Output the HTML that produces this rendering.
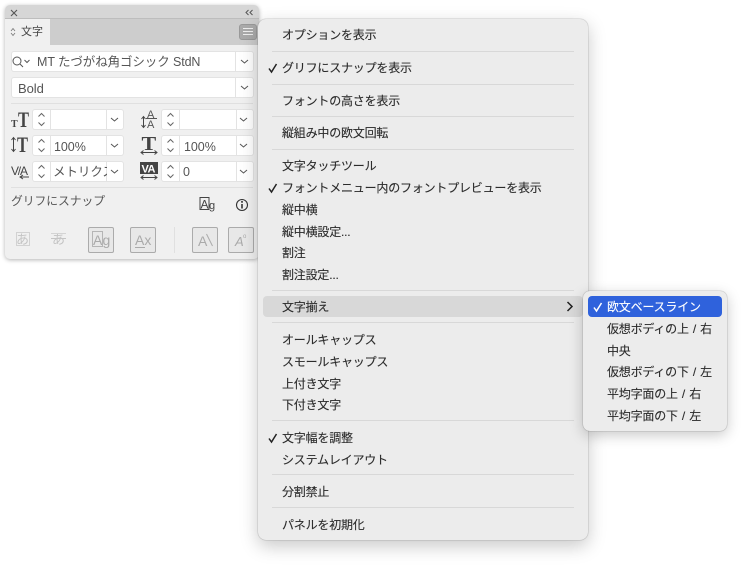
<!DOCTYPE html>
<html lang="ja"><head><meta charset="utf-8">
<style>
*{box-sizing:border-box}
html,body{margin:0;padding:0;width:750px;height:566px;overflow:hidden;background:#fff;font-family:"Liberation Sans","Noto Sans CJK JP",sans-serif}
.a{position:absolute}
#panel{left:5px;top:5px;width:254px;height:254px;background:#f0f0f0;border-radius:5px;box-shadow:0 1px 4px rgba(0,0,0,.3)}
.box{position:absolute;background:#fff;border-radius:2px;box-shadow:0 0 0 1px #e3e3e3;height:19px}
.t{position:absolute;color:#555;font-size:12.5px;line-height:19px;white-space:nowrap;margin-top:1px;letter-spacing:-.05px}
.dv{position:absolute;top:0;bottom:0;width:1px;background:#e3e3e3}
svg{position:absolute;overflow:visible}
.hr{position:absolute;left:11px;width:242px;height:1px;background:#e0e0e0}
.ic{position:absolute;border:1px solid #ababab;border-radius:2px;background:#e8e8e8;width:26px;height:26px}
#menu{left:258px;top:19px;width:330px;height:521px;background:#ececec;border-radius:8px;box-shadow:0 0 1px rgba(0,0,0,.5),0 6px 18px rgba(0,0,0,.22)}
#sub{left:583px;top:291px;width:144px;height:140px;background:#ececec;border-radius:7px;box-shadow:0 0 1px rgba(0,0,0,.5),0 4px 14px rgba(0,0,0,.22)}
.m{position:absolute;font-size:12px;line-height:16px;color:#2b2b2b;white-space:nowrap;-webkit-text-stroke:.12px #2b2b2b;margin-top:1px;letter-spacing:-.2px}
.u{word-spacing:1px}
.s{position:absolute;left:272px;width:302px;height:1px;background:#d8d8d8}
</style></head><body>

<div class="a" id="panel"></div>
<div class="a" style="left:5px;top:5px;width:254px;height:13px;background:#d6d6d6;border-radius:5px 5px 0 0"></div>
<div class="a" style="left:5px;top:18px;width:254px;height:27px;background:#cdcdcd;border-top:1px solid #bdbdbd"></div>
<div class="a" style="left:5px;top:19px;width:45px;height:27px;background:#f0f0f0"></div>
<svg style="left:10px;top:9px" width="8" height="8"><path d="M1 1L7 7M7 1L1 7" stroke="#555" stroke-width="1.1"/></svg>
<svg style="left:245px;top:9px" width="9" height="8"><path d="M3.5 1L1 3.5L3.5 6M7.5 1L5 3.5L7.5 6" stroke="#555" fill="none"/></svg>
<svg style="left:10px;top:27px" width="6" height="10"><path d="M1 4L3 1.5L5 4M1 6L3 8.5L5 6" stroke="#777" fill="none" stroke-width=".8"/></svg>
<div class="t" style="left:21px;top:22px;font-size:11px;color:#444">文字</div>
<div class="a" style="left:239px;top:24px;width:18px;height:16px;background:#aaa;border:1px solid #999;border-radius:3px"></div>
<div class="a" style="left:243px;top:28px;width:10px;height:1px;background:#eee"></div>
<div class="a" style="left:243px;top:31px;width:10px;height:1px;background:#eee"></div>
<div class="a" style="left:243px;top:34px;width:10px;height:1px;background:#eee"></div>

<div class="box" style="left:12px;top:52px;width:241px"><div class="dv" style="left:223px"></div></div>
<svg style="left:12px;top:55px" width="20" height="13"><circle cx="5" cy="6" r="4" stroke="#555" fill="none"/><path d="M8 9L11 12M12.5 5L15 7.5L17.5 5" stroke="#555" fill="none"/></svg>
<div class="t" style="left:37px;top:52px;letter-spacing:-.1px">MT たづがね角ゴシック StdN</div>
<svg style="left:240px;top:59px" width="10" height="6"><path d="M1 1L4.5 4L8 1" stroke="#555" fill="none"/></svg>
<div class="box" style="left:12px;top:78px;width:241px"><div class="dv" style="left:223px"></div></div>
<div class="t" style="left:18px;top:78px;font-size:13px">Bold</div>
<svg style="left:240px;top:85px" width="10" height="6"><path d="M1 1L4.5 4L8 1" stroke="#555" fill="none"/></svg>
<div class="hr" style="top:103px"></div>

<div class="box" style="left:33px;top:110px;width:90px"><div class="dv" style="left:17px"></div><div class="dv" style="left:73px"></div></div>
<div class="box" style="left:162px;top:110px;width:91px"><div class="dv" style="left:17px"></div><div class="dv" style="left:74px"></div></div>
<div class="box" style="left:33px;top:136px;width:90px"><div class="dv" style="left:17px"></div><div class="dv" style="left:73px"></div></div>
<div class="box" style="left:162px;top:136px;width:91px"><div class="dv" style="left:17px"></div><div class="dv" style="left:74px"></div></div>
<div class="box" style="left:33px;top:162px;width:90px"><div class="dv" style="left:17px"></div><div class="dv" style="left:73px"></div></div>
<div class="box" style="left:162px;top:162px;width:91px"><div class="dv" style="left:17px"></div><div class="dv" style="left:74px"></div></div>

<svg style="left:37px;top:112px" width="10" height="16"><path d="M1.5 4.5L4.5 1.5L7.5 4.5M1.5 10.5L4.5 13.5L7.5 10.5" stroke="#666" fill="none"/></svg>
<svg style="left:166px;top:112px" width="10" height="16"><path d="M1.5 4.5L4.5 1.5L7.5 4.5M1.5 10.5L4.5 13.5L7.5 10.5" stroke="#666" fill="none"/></svg>
<svg style="left:37px;top:138px" width="10" height="16"><path d="M1.5 4.5L4.5 1.5L7.5 4.5M1.5 10.5L4.5 13.5L7.5 10.5" stroke="#666" fill="none"/></svg>
<svg style="left:166px;top:138px" width="10" height="16"><path d="M1.5 4.5L4.5 1.5L7.5 4.5M1.5 10.5L4.5 13.5L7.5 10.5" stroke="#666" fill="none"/></svg>
<svg style="left:37px;top:164px" width="10" height="16"><path d="M1.5 4.5L4.5 1.5L7.5 4.5M1.5 10.5L4.5 13.5L7.5 10.5" stroke="#666" fill="none"/></svg>
<svg style="left:166px;top:164px" width="10" height="16"><path d="M1.5 4.5L4.5 1.5L7.5 4.5M1.5 10.5L4.5 13.5L7.5 10.5" stroke="#666" fill="none"/></svg>

<svg style="left:110px;top:117px" width="10" height="6"><path d="M1 1L4.5 4L8 1" stroke="#555" fill="none"/></svg>
<svg style="left:239px;top:117px" width="10" height="6"><path d="M1 1L4.5 4L8 1" stroke="#555" fill="none"/></svg>
<svg style="left:110px;top:143px" width="10" height="6"><path d="M1 1L4.5 4L8 1" stroke="#555" fill="none"/></svg>
<svg style="left:239px;top:143px" width="10" height="6"><path d="M1 1L4.5 4L8 1" stroke="#555" fill="none"/></svg>
<svg style="left:110px;top:169px" width="10" height="6"><path d="M1 1L4.5 4L8 1" stroke="#555" fill="none"/></svg>
<svg style="left:239px;top:169px" width="10" height="6"><path d="M1 1L4.5 4L8 1" stroke="#555" fill="none"/></svg>

<div class="t" style="left:54px;top:137px">100%</div>
<div class="t" style="left:184px;top:137px">100%</div>
<div class="t" style="left:53px;top:162px;width:54px;overflow:hidden">メトリクス</div>
<div class="t" style="left:183px;top:162px">0</div>

<!-- row icons -->
<svg style="left:10px;top:111px" width="22" height="18"><text x="1" y="16" font-family="Liberation Serif" font-weight="700" font-size="10" fill="#444">T</text><text transform="translate(8 16) scale(.75 1)" font-family="Liberation Serif" font-weight="700" font-size="22" fill="#444">T</text></svg>
<svg style="left:10px;top:136px" width="22" height="18"><path d="M3.5 2V15M1.5 4L3.5 1.5L5.5 4M1.5 13L3.5 15.5L5.5 13" stroke="#444" fill="none"/><text transform="translate(7 16) scale(.75 1)" font-family="Liberation Serif" font-weight="700" font-size="22" fill="#444">T</text></svg>
<svg style="left:11px;top:163px" width="20" height="18"><text x="0" y="12" font-family="Liberation Sans" font-size="12" fill="#444" letter-spacing="-1.2">V/A</text><path d="M9 14H18M12 12L9 14L12 16" stroke="#444" fill="none"/></svg>
<svg style="left:140px;top:108px" width="20" height="22"><text x="7" y="10" font-family="Liberation Sans" font-size="11" fill="#555">A</text><text x="7" y="20" font-family="Liberation Sans" font-size="11" fill="#555">A</text><path d="M6 10.5H17" stroke="#555"/><path d="M3.5 9V19M1.5 11L3.5 8.5L5.5 11M1.5 17L3.5 19.5L5.5 17" stroke="#444" fill="none"/></svg>
<svg style="left:140px;top:136px" width="20" height="20"><text transform="translate(1.5 14) scale(1.1 1)" font-family="Liberation Serif" font-weight="700" font-size="20" fill="#444">T</text><path d="M1 16.5H17M3.5 14.5L1 16.5L3.5 18.5M14.5 14.5L17 16.5L14.5 18.5" stroke="#444" fill="none"/></svg>
<svg style="left:140px;top:162px" width="20" height="20"><rect x="0" y="0" width="18" height="12" fill="#444"/><text x="1.5" y="10.5" font-family="Liberation Sans" font-weight="700" font-size="11" fill="#fff" letter-spacing="-.5">VA</text><path d="M1 15.5H17M3.5 13.5L1 15.5L3.5 17.5M14.5 13.5L17 15.5L14.5 17.5" stroke="#444" fill="none"/></svg>

<div class="hr" style="top:187px"></div>
<div class="t" style="left:11px;top:191px;font-size:11.8px">グリフにスナップ</div>
<svg style="left:199px;top:197px" width="18" height="16"><rect x="1" y="0.5" width="9" height="12" fill="none" stroke="#444"/><text x="1.5" y="11.5" font-family="Liberation Sans" font-size="12" fill="#444">A</text><text x="10" y="12" font-family="Liberation Sans" font-size="11" fill="#444">g</text></svg>
<svg style="left:235px;top:198px" width="14" height="14"><circle cx="7" cy="7" r="5.5" fill="none" stroke="#333" stroke-width="1.1"/><path d="M7 6V10.5" stroke="#333" stroke-width="1.6"/><circle cx="7" cy="3.9" r="1" fill="#333"/></svg>

<div class="t" style="left:16px;top:229px;color:#c4c4c4;font-size:13px">あ</div>
<div class="a" style="left:16px;top:232px;width:14px;height:14px;border:1px solid #d2d2d2"></div>
<div class="t" style="left:52px;top:229px;color:#c4c4c4;font-size:13px">あ</div>
<div class="a" style="left:51px;top:238px;width:15px;height:1px;background:#c4c4c4"></div>
<div class="a" style="left:51px;top:233px;width:15px;height:1px;background:#d4d4d4"></div>
<div class="ic" style="left:88px;top:227px"><svg style="left:0;top:0" width="24" height="24"><rect x="3.5" y="3.5" width="10" height="15" fill="none" stroke="#b5b5b5"/><text x="4" y="17" font-family="Liberation Sans" font-size="14" fill="#aaa">A</text><text x="13.5" y="17" font-family="Liberation Sans" font-size="14" fill="#aaa">g</text></svg></div>
<div class="ic" style="left:130px;top:227px"><svg style="left:0;top:0" width="24" height="24"><text x="4" y="17" font-family="Liberation Sans" font-size="14" fill="#aaa">Ax</text><path d="M4 19.5H14" stroke="#aaa"/></svg></div>
<div class="a" style="left:174px;top:227px;width:1px;height:26px;background:#e0e0e0"></div>
<div class="ic" style="left:192px;top:227px"><svg style="left:0;top:0" width="24" height="24"><text x="5" y="18" font-family="Liberation Sans" font-size="14" fill="#aaa">A</text><path d="M13.5 6L19.5 18" stroke="#aaa"/></svg></div>
<div class="ic" style="left:228px;top:227px"><svg style="left:0;top:0" width="24" height="24"><text x="6" y="18" font-family="Liberation Sans" font-style="italic" font-size="13" fill="#aaa">A</text><text x="14" y="10" font-family="Liberation Sans" font-size="6" fill="#aaa">o</text></svg></div>

<!-- main menu -->
<div class="a" id="menu"></div>
<div class="m" style="left:282px;top:26px">オプションを表示</div>
<div class="s" style="top:51px"></div>
<svg style="left:268px;top:63px" width="10" height="10"><path d="M1 5.5L3.5 9L8.5 1" stroke="#222" stroke-width="1.5" fill="none"/></svg>
<div class="m" style="left:282px;top:59px">グリフにスナップを表示</div>
<div class="s" style="top:84px"></div>
<div class="m" style="left:282px;top:92px">フォントの高さを表示</div>
<div class="s" style="top:116px"></div>
<div class="m" style="left:282px;top:124px">縦組み中の欧文回転</div>
<div class="s" style="top:149px"></div>
<div class="m" style="left:282px;top:157px">文字タッチツール</div>
<svg style="left:268px;top:183px" width="10" height="10"><path d="M1 5.5L3.5 9L8.5 1" stroke="#222" stroke-width="1.5" fill="none"/></svg>
<div class="m" style="left:282px;top:179px">フォントメニュー内のフォントプレビューを表示</div>
<div class="m" style="left:282px;top:201px">縦中横</div>
<div class="m" style="left:282px;top:223px">縦中横設定...</div>
<div class="m" style="left:282px;top:244px">割注</div>
<div class="m" style="left:282px;top:266px">割注設定...</div>
<div class="s" style="top:290px"></div>
<div class="a" style="left:263px;top:296px;width:320px;height:21px;background:#d8d8d8;border-radius:4px"></div>
<div class="m" style="left:282px;top:298px">文字揃え</div>
<svg style="left:566px;top:301px" width="8" height="11"><path d="M1.5 1L6 5.5L1.5 10" stroke="#222" stroke-width="1.5" fill="none"/></svg>
<div class="s" style="top:322px"></div>
<div class="m" style="left:282px;top:331px">オールキャップス</div>
<div class="m" style="left:282px;top:353px">スモールキャップス</div>
<div class="m" style="left:282px;top:375px">上付き文字</div>
<div class="m" style="left:282px;top:396px">下付き文字</div>
<div class="s" style="top:420px"></div>
<svg style="left:268px;top:433px" width="10" height="10"><path d="M1 5.5L3.5 9L8.5 1" stroke="#222" stroke-width="1.5" fill="none"/></svg>
<div class="m" style="left:282px;top:429px">文字幅を調整</div>
<div class="m" style="left:282px;top:451px">システムレイアウト</div>
<div class="s" style="top:474px"></div>
<div class="m" style="left:282px;top:483px">分割禁止</div>
<div class="s" style="top:507px"></div>
<div class="m" style="left:282px;top:516px">パネルを初期化</div>

<!-- submenu -->
<div class="a" id="sub"></div>
<div class="a" style="left:588px;top:296px;width:134px;height:21px;background:#2f62dc;border-radius:4px"></div>
<svg style="left:593px;top:302px" width="10" height="10"><path d="M1 5.5L3.5 9L8.5 1" stroke="#fff" stroke-width="1.5" fill="none"/></svg>
<div class="m u" style="left:607px;top:298px;color:#fff;-webkit-text-stroke:.12px #fff">欧文ベースライン</div>
<div class="m u" style="left:607px;top:320px">仮想ボディの上 / 右</div>
<div class="m u" style="left:607px;top:342px">中央</div>
<div class="m u" style="left:607px;top:363px">仮想ボディの下 / 左</div>
<div class="m u" style="left:607px;top:385px">平均字面の上 / 右</div>
<div class="m u" style="left:607px;top:407px">平均字面の下 / 左</div>

</body></html>
